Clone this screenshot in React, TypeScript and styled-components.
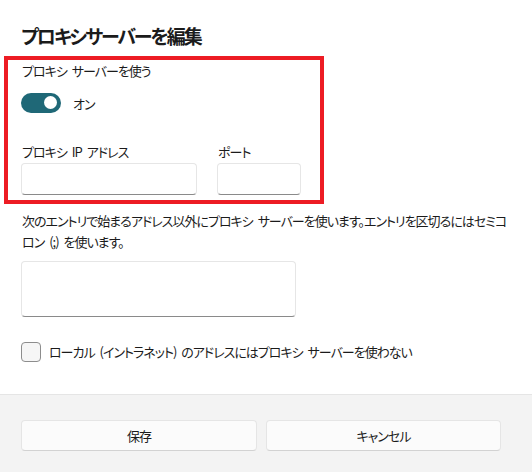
import React from 'react';
import styled, { createGlobalStyle } from 'styled-components';

const GlobalStyle = createGlobalStyle`
  html, body {
    margin: 0;
    padding: 0;
    background: #ffffff;
  }
  body {
    font-family: "Noto Sans CJK JP", "Noto Sans", sans-serif;
    font-feature-settings: "palt" 1;
    color: #1b1b1b;
    -webkit-font-smoothing: antialiased;
  }
`;

const Dialog = styled.div`
  display: flex;
  flex-direction: column;
  width: 532px;
  height: 472px;
  overflow: hidden;
`;

const Content = styled.div`
  position: relative;
  flex: 1;
  display: flex;
  flex-direction: column;
  align-items: flex-start;
  padding: 22px 14px 0 21px;
  font-size: 13px;
  letter-spacing: -1px;
  word-spacing: 3px;
`;

const Title = styled.h2`
  margin: 0;
  font-size: 19px;
  line-height: 28px;
  font-weight: 700;
  letter-spacing: -2px;
`;

const Label = styled.div<{ $top?: number }>`
  margin-top: ${(p) => p.$top ?? 0}px;
  line-height: 20px;
  padding-left: 1px;
`;

const ToggleRow = styled.div`
  display: flex;
  align-items: center;
  gap: 12px;
  margin-top: 12px;
  height: 20px;
`;

const Toggle = styled.span`
  position: relative;
  display: inline-block;
  width: 40px;
  height: 20px;
  border-radius: 10px;
  background: #1f6877;

  &::after {
    content: '';
    position: absolute;
    top: 3px;
    right: 4px;
    width: 13px;
    height: 13px;
    border-radius: 50%;
    background: #ffffff;
  }
`;

const FieldRow = styled.div`
  display: grid;
  grid-template-columns: 176px 84px;
  column-gap: 20px;
  margin-top: 29px;
`;

const Field = styled.div`
  display: flex;
  flex-direction: column;
  gap: 1px;
`;

const TextBox = styled.div<{ $height?: number }>`
  box-sizing: border-box;
  height: ${(p) => p.$height ?? 32}px;
  background: #ffffff;
  border: 1px solid #e6e6e6;
  border-bottom: 1px solid #8a8a8a;
  border-radius: 4px;
`;

const Description = styled.p`
  margin: 15px 0 0;
  max-width: 494px;
  line-height: 21px;
  padding-left: 1px;
`;

const WideBox = styled(TextBox)`
  width: 275px;
  margin-top: 9px;
`;

const CheckRow = styled.label`
  display: flex;
  align-items: center;
  gap: 8px;
  margin-top: 25px;
  line-height: 20px;
`;

const CheckBox = styled.span`
  box-sizing: border-box;
  width: 20px;
  height: 20px;
  border: 1px solid #8d8d8d;
  border-radius: 4px;
  background: #f6f6f6;
`;

const Annotation = styled.div`
  position: absolute;
  left: 4px;
  top: 56px;
  width: 320px;
  height: 148px;
  box-sizing: border-box;
  border: 4px solid #ed1c24;
  pointer-events: none;
`;

const Footer = styled.div`
  flex: none;
  height: 78px;
  box-sizing: border-box;
  background: #f3f3f3;
  border-top: 1px solid #e5e5e5;
  display: grid;
  grid-template-columns: 236px 235px;
  column-gap: 9px;
  align-content: start;
  padding: 25px 0 0 21px;
`;

const Button = styled.button`
  box-sizing: border-box;
  height: 31px;
  background: #fbfbfb;
  border: 1px solid #e5e5e5;
  border-bottom-color: #d2d2d2;
  border-radius: 4px;
  font-family: inherit;
  font-feature-settings: "palt" 1;
  font-size: 13px;
  letter-spacing: -1px;
  color: #1b1b1b;
  padding: 0;
`;

export default function App() {
  return (
    <Dialog>
      <GlobalStyle />
      <Content>
        <Title>プロキシサーバーを編集</Title>
        <Label $top={11}>プロキシ サーバーを使う</Label>
        <ToggleRow>
          <Toggle />
          <span>オン</span>
        </ToggleRow>
        <FieldRow>
          <Field>
            <Label>プロキシ IP アドレス</Label>
            <TextBox />
          </Field>
          <Field>
            <Label>ポート</Label>
            <TextBox />
          </Field>
        </FieldRow>
        <Description>
          次のエントリで始まるアドレス以外にプロキシ サーバーを使います。エントリを区切るにはセミコロン (;) を使います。
        </Description>
        <WideBox $height={56} />
        <CheckRow>
          <CheckBox />
          <span>ローカル (イントラネット) のアドレスにはプロキシ サーバーを使わない</span>
        </CheckRow>
        <Annotation />
      </Content>
      <Footer>
        <Button>保存</Button>
        <Button>キャンセル</Button>
      </Footer>
    </Dialog>
  );
}
